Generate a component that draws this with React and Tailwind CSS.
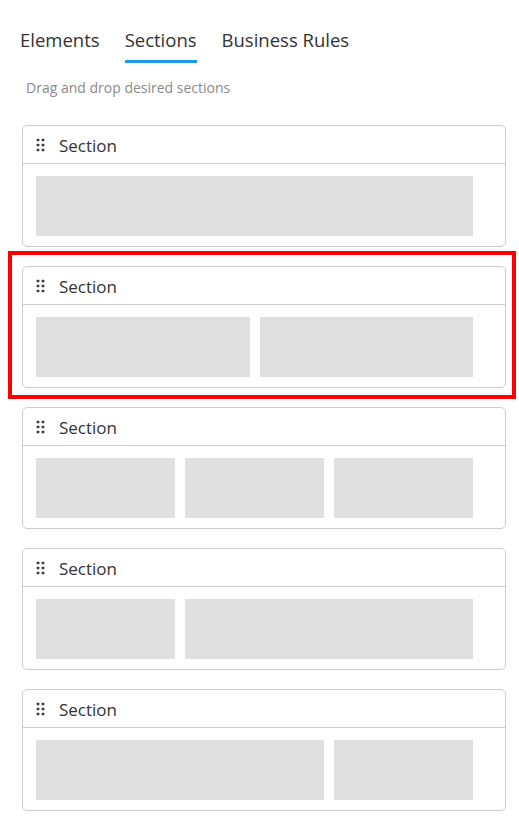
import React from 'react';

// Column layouts for each section row (spans on a 3-column grid)
const SECTIONS = [
    { id: 1, cols: [3] },
    { id: 2, cols: [1.5, 1.5], selected: true },
    { id: 3, cols: [1, 1, 1] },
    { id: 4, cols: [1, 2] },
    { id: 5, cols: [2, 1] },
];

const TABS = ['Elements', 'Sections', 'Business Rules'];

function DragHandle() {
    return (
        <svg width="10" height="14" viewBox="0 0 10 14" className="shrink-0">
            {[2, 7, 12].map((y) =>
                [2, 7].map((x) => (
                    <rect key={`${x}-${y}`} x={x - 1.3} y={y - 1.3} width="2.6" height="2.6" rx="0.6" fill="#3a3a3a" />
                ))
            )}
        </svg>
    );
}

function SectionCard({ cols, selected }) {
    const half = cols.length === 2 && cols[0] === 1.5;
    return (
        <div className="relative">
            {selected && (
                <div className="absolute -top-[15px] -left-[14px] -right-[10px] -bottom-[11px] border-4 border-[#ff0000] pointer-events-none" />
            )}
            <div className="h-[122px] rounded-[5px] border border-[#cccccc] bg-white">
                <div className="h-[38px] flex items-center gap-[13px] pl-[13px] pt-[1px] border-b border-[#cccccc]">
                    <DragHandle />
                    <span className="text-[17px] text-[#333333] pt-[1px]">Section</span>
                </div>
                <div className="pt-[12px] pl-[13px] pr-[32px]">
                    {half ? (
                        <div className="grid grid-cols-2 gap-[10px]">
                            <div className="h-[60px] bg-[#e0e0e0]" />
                            <div className="h-[60px] bg-[#e0e0e0]" />
                        </div>
                    ) : (
                        <div className="grid grid-cols-3 gap-[10px]">
                            {cols.map((span, i) => (
                                <div
                                    key={i}
                                    className={
                                        'h-[60px] bg-[#e0e0e0] ' +
                                        (span === 3 ? 'col-span-3' : span === 2 ? 'col-span-2' : 'col-span-1')
                                    }
                                />
                            ))}
                        </div>
                    )}
                </div>
            </div>
        </div>
    );
}

export default function App() {
    return (
        <div className="w-[519px] min-h-[824px] bg-white font-['Open_Sans',sans-serif]">
            <div className="flex gap-[25px] pl-[20px] pt-[28px]">
                {TABS.map((tab) => (
                    <div
                        key={tab}
                        className={
                            'text-[18.5px] leading-[24px] pb-[8px] border-b-[3px] ' +
                            (tab === 'Sections' ? 'border-[#1a9be0] text-[#333333]' : 'border-transparent text-[#333333]')
                        }
                    >
                        {tab}
                    </div>
                ))}
            </div>
            <p className="mt-[15px] pl-[26px] text-[14px] leading-[20px] text-[#8a8a8a]">
                Drag and drop desired sections
            </p>
            <div className="mt-[27px] ml-[22px] w-[484px] flex flex-col gap-[19px] pb-[12px]">
                {SECTIONS.map((s) => (
                    <SectionCard key={s.id} cols={s.cols} selected={s.selected} />
                ))}
            </div>
        </div>
    );
}
